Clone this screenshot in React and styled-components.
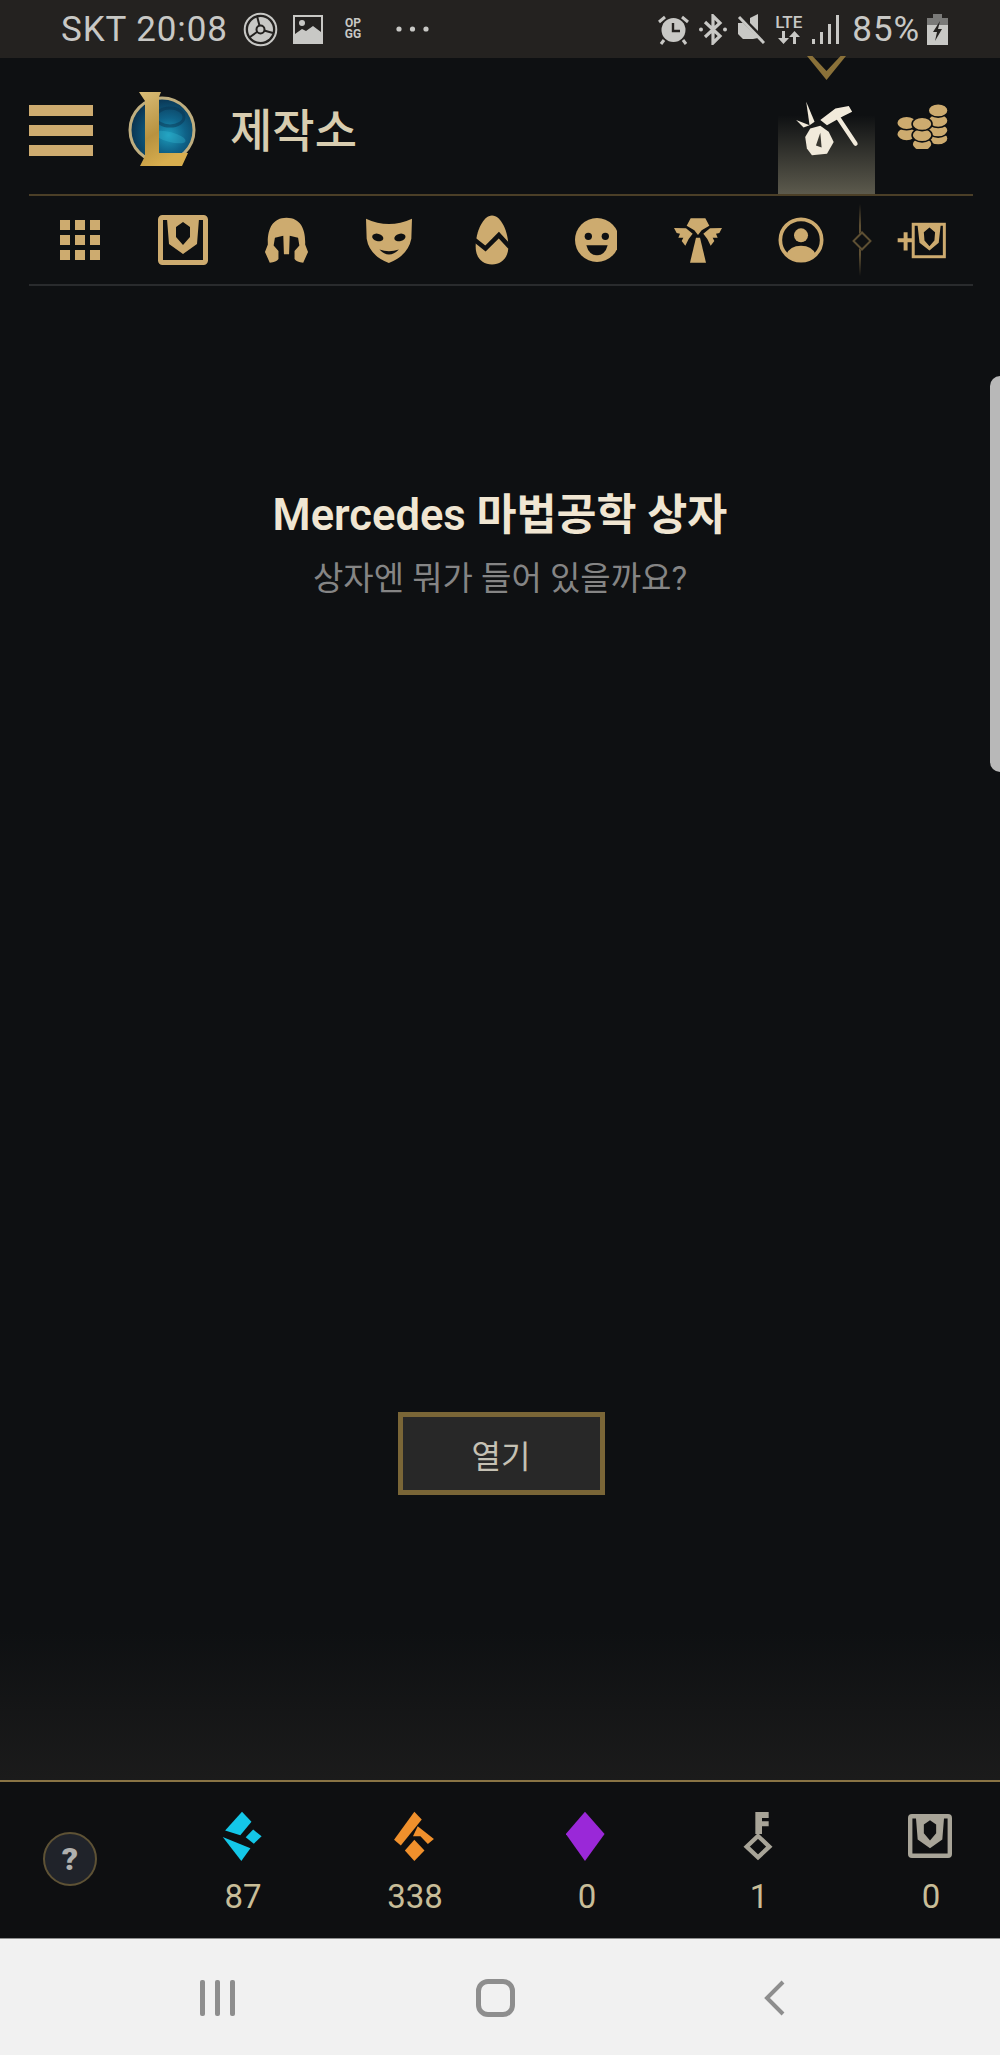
import styled, { createGlobalStyle } from 'styled-components';

const GOLD = '#cdab6f';
const BG = '#0e1012';
const STATUS = '#c8c8c5';

const GlobalStyle = createGlobalStyle`
  html, body {
    margin: 0;
    padding: 0;
    background: ${BG};
  }
  * {
    box-sizing: border-box;
  }
`;

const ChestIcon = ({ color, size }) => (
  <svg width={size} height={size} viewBox='0 0 50 50'>
    <rect x='2.5' y='2.5' width='45' height='45' rx='2' fill='none' stroke={color} strokeWidth='5' />
    <path
      fillRule='evenodd'
      fill={color}
      d='M9 4H41L39 29L25 39L11 29ZM25 7L32 12V22L25 30L18 22V12Z'
    />
  </svg>
);

const GridIcon = () => (
  <svg width='40' height='40' viewBox='0 0 40 40' fill={GOLD}>
    {[0, 15, 30].map((y) =>
      [0, 15, 30].map((x) => <rect key={`${x}-${y}`} x={x} y={y} width='10' height='10' />)
    )}
  </svg>
);

const HelmetIcon = () => (
  <svg width='45' height='47' viewBox='790 640 140 145'>
    <path
      fill={GOLD}
      d='M860 642C905 642 920 680 918 725L927 748L912 782Q892 780 885 770L885 745L900 728L896 704L870 698L868 755H852L850 698L824 704L820 728L835 745L835 770Q828 780 808 782L793 748L802 725C800 680 815 642 860 642Z'
    />
  </svg>
);

const MaskIcon = () => (
  <svg width='46' height='45' viewBox='1100 648 137 134'>
    <path fill={GOLD} d='M1100 650Q1168 682 1237 650L1235 710Q1225 760 1168 782Q1110 760 1102 710Z' />
    <ellipse cx='1135' cy='706' rx='17' ry='11' fill={BG} transform='rotate(15 1135 706)' />
    <ellipse cx='1201' cy='706' rx='17' ry='11' fill={BG} transform='rotate(-15 1201 706)' />
    <path fill={BG} d='M1140 742Q1168 772 1198 742Q1168 752 1140 742Z' />
  </svg>
);

const EggIcon = () => (
  <svg width='34' height='50' viewBox='105 40 104 150'>
    <path
      fill={GOLD}
      d='M157 40C185 40 207 90 207 135C207 170 185 190 157 190C128 190 107 170 107 135C107 90 130 40 157 40Z'
    />
    <path fill='none' stroke={BG} strokeWidth='14' d='M103 114L137 141L178 100L212 137' />
  </svg>
);

const SmileIcon = () => (
  <svg width='44' height='44' viewBox='222 653 132 132'>
    <circle cx='294' cy='719' r='66' fill={GOLD} />
    <circle cx='268' cy='708' r='11' fill={BG} />
    <circle cx='319' cy='708' r='11' fill={BG} />
    <path fill={BG} d='M262 735H326Q318 765 294 765Q270 765 262 735Z' />
  </svg>
);

const WardIcon = () => (
  <svg width='50' height='46' viewBox='520 650 148 138' fill={GOLD}>
    <path d='M572 654H616L628 676L605 690L594 704L583 690L560 676Z' />
    <path d='M588 712H600L618 787H570Z' />
    <path d='M522 683L558 684L578 700L566 716L556 736L545 722L550 712L535 712L540 700L530 698Z' />
    <path d='M666 683L630 684L610 700L622 716L632 736L643 722L638 712L653 712L648 700L658 698Z' />
  </svg>
);

const ProfileIcon = () => (
  <svg width='46' height='46' viewBox='836 647 138 138'>
    <circle cx='905' cy='716' r='62' fill='none' stroke={GOLD} strokeWidth='11' />
    <circle cx='905' cy='702' r='21' fill={GOLD} />
    <path fill={GOLD} d='M860 760Q872 733 905 733Q938 733 950 760Q930 780 905 780Q880 780 860 760Z' />
  </svg>
);

const AddChestIcon = () => (
  <svg width='49' height='37' viewBox='1190 660 148 110'>
    <path fill={GOLD} d='M1192 708H1210V690H1222V708H1240V720H1222V745H1210V720H1192Z' />
    <rect x='1239' y='666' width='94' height='98' fill={BG} stroke={GOLD} strokeWidth='9' />
    <path
      fillRule='evenodd'
      fill={GOLD}
      d='M1252 668H1322L1316 722L1288 745L1258 722ZM1288 676L1305 690L1303 715L1288 732L1273 715L1271 690Z'
    />
  </svg>
);

const CraftIcon = () => (
  <svg width='64' height='57' viewBox='75 130 190 170'>
    <path fill='#f1eadb' d='M105 240L120 215L150 207L175 225L190 255L170 290L125 295L110 275Z' />
    <path fill='#3a3830' d='M150 228L154 272L137 266Z' />
    <path fill='#f1eadb' d='M108 135L133 195L118 205Z' />
    <path fill='#f1eadb' d='M78 190L118 205L100 212Z' />
    <path fill='#f1eadb' d='M150 190L195 155L235 148L245 165L215 180L170 205Z' />
    <path stroke='#f1eadb' strokeWidth='13' strokeLinecap='round' d='M205 185L255 260' />
  </svg>
);

const CoinsIcon = () => {
  const coins = [
    [409, 237],
    [409, 202],
    [507, 250],
    [507, 225],
    [507, 195],
    [507, 163],
    [457, 268],
    [457, 240],
    [457, 205],
  ];
  return (
    <svg width='54' height='46' viewBox='385 140 156 143'>
      {coins.map(([cx, cy]) => (
        <ellipse key={`${cx}-${cy}`} cx={cx} cy={cy} rx='31' ry='21' fill={GOLD} stroke={BG} strokeWidth='5' />
      ))}
    </svg>
  );
};

const LogoIcon = () => (
  <svg width='70' height='78' viewBox='0 0 70 78'>
    <defs>
      <radialGradient id='orb' cx='60%' cy='58%' r='60%'>
        <stop offset='0%' stopColor='#1d9cbc' />
        <stop offset='45%' stopColor='#0f6288' />
        <stop offset='100%' stopColor='#0a3350' />
      </radialGradient>
      <linearGradient id='gilt' x1='0' y1='0' x2='0.4' y2='1'>
        <stop offset='0%' stopColor='#d9bd78' />
        <stop offset='60%' stopColor='#b8923f' />
        <stop offset='100%' stopColor='#d8ae4e' />
      </linearGradient>
    </defs>
    <circle cx='34' cy='39' r='32' fill='url(#orb)' stroke='#bfae7f' strokeWidth='3' />
    <ellipse cx='42' cy='46' rx='16' ry='5' fill='#35b6d2' opacity='0.35' transform='rotate(15 42 46)' />
    <ellipse cx='42' cy='26' rx='14' ry='9' fill='none' stroke='#0a3350' strokeWidth='3' opacity='0.5' />
    <path fill='url(#gilt)' d='M11 1H33L31 6V62H60L54 75H12L17 65V10Z' />
  </svg>
);

const GameIcon = () => (
  <svg width='35' height='35' viewBox='0 0 35 35'>
    <circle cx='17.5' cy='17.5' r='15.8' fill='none' stroke={STATUS} strokeWidth='2' />
    <circle cx='17.5' cy='17.5' r='12.5' fill={STATUS} />
    <path stroke='#242220' strokeWidth='2' d='M17.5 17.5L14 4M17.5 17.5L30 21M17.5 17.5L7 25' />
    <circle cx='17.5' cy='17.5' r='4' fill={STATUS} stroke='#242220' strokeWidth='2' />
  </svg>
);

const PictureIcon = () => (
  <svg width='30' height='29' viewBox='0 0 30 29'>
    <rect width='30' height='29' fill={STATUS} />
    <rect x='2' y='2' width='26' height='19' fill='#242220' />
    <circle cx='9' cy='8' r='3' fill={STATUS} />
    <path fill={STATUS} d='M2 19L9 14L13 16L20 11L28 17V24H2Z' />
  </svg>
);

const DotsIcon = () => (
  <svg width='33' height='6' viewBox='0 0 33 6' fill={STATUS}>
    <circle cx='3' cy='3' r='2.6' />
    <circle cx='16.5' cy='3' r='2.6' />
    <circle cx='30' cy='3' r='2.6' />
  </svg>
);

const AlarmIcon = () => (
  <svg width='31' height='31' viewBox='0 0 31 31'>
    <circle cx='15.5' cy='16' r='12' fill={STATUS} />
    <path stroke='#242220' strokeWidth='2.4' fill='none' d='M15 9V17H22' />
    <path stroke={STATUS} strokeWidth='3' d='M1 8L7 3M30 8L24 3M6 26L3 30M25 26L28 30' />
  </svg>
);

const BluetoothIcon = () => (
  <svg width='28' height='31' viewBox='0 0 28 31'>
    <path stroke={STATUS} strokeWidth='3.2' fill='none' d='M6 8L21 22L14 29V2L21 9L6 23' />
    <circle cx='2' cy='15.5' r='2' fill={STATUS} />
    <circle cx='26' cy='15.5' r='2' fill={STATUS} />
  </svg>
);

const MuteIcon = () => (
  <svg width='28' height='30' viewBox='0 0 28 30'>
    <path fill={STATUS} d='M1 9H6L21 24L16 25H6L1 20ZM13 4L21 0V17L13 9Z' />
    <path stroke={STATUS} strokeWidth='3' d='M2 3L27 29' />
  </svg>
);

const TransferIcon = () => (
  <svg width='24' height='13' viewBox='0 0 24 13' fill={STATUS}>
    <path d='M5 0H8V7H12L6.5 13L1 7H5Z' />
    <path d='M16 13H19V6H23L17.5 0L12 6H16Z' />
  </svg>
);

const SignalIcon = () => (
  <svg width='27' height='29' viewBox='0 0 27 29' fill={STATUS}>
    <rect x='0' y='24' width='3' height='5' />
    <rect x='8' y='17' width='3' height='12' />
    <rect x='16' y='9' width='3' height='20' />
    <rect x='24' y='0' width='3' height='29' />
  </svg>
);

const BatteryIcon = () => (
  <svg width='21' height='31' viewBox='0 0 21 31'>
    <rect x='6' y='0' width='9' height='4' fill='#7a7a78' />
    <rect x='0' y='4' width='21' height='7' fill='#7a7a78' />
    <rect x='0' y='11' width='21' height='20' fill={STATUS} />
    <path fill='#242220' d='M13 7L6 18H10L8 27L15 15H11Z' />
  </svg>
);

const BlueEssenceIcon = () => (
  <svg width='40' height='50' viewBox='668 120 118 148' fill='#14c7e8'>
    <path d='M727 122L755 152L722 192L677 178Z' />
    <path d='M760 175L785 195L762 217L738 198Z' />
    <path d='M670 197L752 230L725 268Z' />
  </svg>
);

const OrangeEssenceIcon = () => (
  <svg width='40' height='50' viewBox='1180 120 118 148' fill='#f0902c'>
    <path d='M1240 122L1262 145L1200 222L1180 205Z' />
    <path d='M1250 165L1298 203L1280 218L1258 195L1236 195Z' />
    <path d='M1240 205L1270 237L1240 268L1212 237Z' />
  </svg>
);

const GemIcon = () => (
  <svg width='40' height='50' viewBox='198 120 118 148'>
    <path fill='#9a28d8' d='M254 122L312 188L254 268L197 188Z' />
  </svg>
);

const KeyIcon = () => (
  <svg width='30' height='50' viewBox='725 120 90 148'>
    <path fill='#a8a498' d='M762 122H802V140H782V150H802V165H782V188H762Z' />
    <path fill='none' stroke='#a8a498' strokeWidth='13' d='M770 194L804 226L770 258L736 226Z' />
  </svg>
);

const tabs = [GridIcon, () => <ChestIcon color={GOLD} size={50} />, HelmetIcon, MaskIcon, EggIcon, SmileIcon, WardIcon, ProfileIcon];

const wallet = [
  { Icon: BlueEssenceIcon, value: 87 },
  { Icon: OrangeEssenceIcon, value: 338 },
  { Icon: GemIcon, value: 0 },
  { Icon: KeyIcon, value: 1 },
  { Icon: () => <ChestIcon color='#a8a498' size={44} />, value: 0 },
];

export default function App() {
  return (
    <>
      <GlobalStyle />
      <Page>
        <StatusBar>
          <StatusLeft>
            <StatusText>SKT 20:08</StatusText>
            <GameIcon />
            <PictureIcon />
            <OpGg>
              OP
              <br />
              GG
            </OpGg>
            <DotsIcon />
          </StatusLeft>
          <StatusRight>
            <AlarmIcon />
            <BluetoothIcon />
            <MuteIcon />
            <LteBlock>
              <LteText>LTE</LteText>
              <TransferIcon />
            </LteBlock>
            <SignalIcon />
            <Percent>85%</Percent>
            <BatteryIcon />
          </StatusRight>
        </StatusBar>

        <Header>
          <HeaderLeft>
            <Burger>
              <BurgerBar />
              <BurgerBar />
              <BurgerBar />
            </Burger>
            <LogoIcon />
            <Title>제작소</Title>
          </HeaderLeft>
          <HeaderTabs>
            <ActiveTab>
              <Chevron />
              <CraftIcon />
            </ActiveTab>
            <CoinTab>
              <CoinsIcon />
            </CoinTab>
          </HeaderTabs>
        </Header>

        <TabRow>
          {tabs.map((TabIcon, index) => (
            <TabCell key={index}>
              <TabIcon />
            </TabCell>
          ))}
          <Divider />
          <AddCell>
            <AddChestIcon />
          </AddCell>
        </TabRow>

        <Main>
          <Heading>Mercedes 마법공학 상자</Heading>
          <SubHeading>상자엔 뭐가 들어 있을까요?</SubHeading>
          <OpenButton>열기</OpenButton>
        </Main>

        <Footer>
          <HelpButton>?</HelpButton>
          <Wallet>
            {wallet.map(({ Icon, value }, index) => (
              <WalletItem key={index}>
                <WalletIcon>
                  <Icon />
                </WalletIcon>
                <WalletValue>{value}</WalletValue>
              </WalletItem>
            ))}
          </Wallet>
        </Footer>

        <NavBar>
          <RecentsIcon>
            <RecentsBar />
            <RecentsBar />
            <RecentsBar />
          </RecentsIcon>
          <HomeIcon />
          <BackIcon viewBox='0 0 21 36'>
            <path d='M19 2L3 18L19 34' fill='none' stroke='#8e8e8e' strokeWidth='4' />
          </BackIcon>
        </NavBar>

        <ScrollHandle />
      </Page>
    </>
  );
}

const Page = styled.div`
  position: relative;
  width: 1000px;
  height: 2055px;
  overflow: hidden;
  display: flex;
  flex-direction: column;
  background: ${BG};
  font-family: Roboto, 'Noto Sans CJK KR', sans-serif;
`;

const StatusBar = styled.div`
  height: 58px;
  flex: none;
  display: flex;
  align-items: center;
  justify-content: space-between;
  padding: 0 52px 0 61px;
  background: #242220;
`;

const StatusLeft = styled.div`
  display: flex;
  align-items: center;
  gap: 15px;
`;

const StatusRight = styled.div`
  display: flex;
  align-items: center;
  gap: 10px;
`;

const StatusText = styled.span`
  font-size: 35px;
  letter-spacing: 0.9px;
  color: ${STATUS};
  white-space: nowrap;
`;

const Percent = styled(StatusText)`
  margin: 0 -3px 0 3px;
`;

const OpGg = styled.span`
  width: 20px;
  margin: 0 18px 0 5px;
  font-size: 12px;
  line-height: 11px;
  font-weight: 700;
  text-align: center;
  color: ${STATUS};
`;

const LteBlock = styled.div`
  display: flex;
  flex-direction: column;
  align-items: center;
  gap: 1px;
`;

const LteText = styled.span`
  font-size: 17px;
  line-height: 16px;
  font-weight: 500;
  color: ${STATUS};
`;

const Header = styled.div`
  height: 138px;
  flex: none;
  margin: 0 27px 0 29px;
  display: flex;
  justify-content: space-between;
  border-bottom: 2px solid #4b3f27;
`;

const HeaderLeft = styled.div`
  display: flex;
  align-items: center;
  height: 136px;
  padding-top: 8px;
`;

const Burger = styled.div`
  display: flex;
  flex-direction: column;
  gap: 9px;
  margin-right: 35px;
`;

const BurgerBar = styled.div`
  width: 64px;
  height: 11px;
  background: ${GOLD};
`;

const Title = styled.h1`
  margin: 0 0 6px 32px;
  font-size: 46px;
  font-weight: 500;
  color: #d8cdb0;
`;

const HeaderTabs = styled.div`
  display: flex;
  margin-right: 1px;
`;

const ActiveTab = styled.div`
  position: relative;
  width: 97px;
  display: flex;
  justify-content: center;
  padding-top: 42px;
  background: linear-gradient(to bottom, transparent 42%, #5c5a4d 100%);
`;

const Chevron = styled.div`
  position: absolute;
  top: -2px;
  left: 29px;
  width: 39px;
  height: 24px;
  background: #8a7139;
  clip-path: polygon(0 0, 14% 0, 50% 62%, 86% 0, 100% 0, 50% 100%);

  &::before {
    content: '';
    position: absolute;
    top: 0;
    left: 12px;
    width: 15px;
    height: 9px;
    background: #5d4f33;
    clip-path: polygon(0 0, 20% 0, 50% 55%, 80% 0, 100% 0, 50% 100%);
  }
`;

const CoinTab = styled.div`
  width: 97px;
  display: flex;
  justify-content: center;
  padding: 45px 0 0 0;
`;

const TabRow = styled.div`
  height: 90px;
  flex: none;
  margin: 0 27px 0 29px;
  display: flex;
  align-items: center;
  border-bottom: 2px solid #292b2d;
`;

const TabCell = styled.div`
  width: 102.9px;
  flex: none;
  display: flex;
  justify-content: center;
  align-items: center;
`;

const Divider = styled.div`
  position: relative;
  width: 2px;
  height: 72px;
  margin-left: 7px;
  flex: none;
  background: linear-gradient(to bottom, transparent, #5d4f33 30%, #5d4f33 70%, transparent);

  &::after {
    content: '';
    position: absolute;
    top: 30px;
    left: -4px;
    width: 10px;
    height: 10px;
    background: ${BG};
    border: 2px solid #5d4f33;
    transform: rotate(45deg);
  }
`;

const AddCell = styled.div`
  flex: 1;
  display: flex;
  justify-content: flex-end;
  padding-right: 27px;
`;

const Main = styled.div`
  flex: 1;
  display: flex;
  flex-direction: column;
  align-items: center;
  padding: 205px 0 285px;
  background: linear-gradient(to bottom, ${BG} 90%, #1b1b1b 100%);
`;

const Heading = styled.h2`
  margin: 0;
  font-size: 43.5px;
  line-height: 50px;
  font-weight: 600;
  color: #f0e6d2;
`;

const SubHeading = styled.p`
  margin: 16px 0 0;
  font-size: 33px;
  line-height: 44px;
  color: #858585;
`;

const OpenButton = styled.button`
  width: 207px;
  height: 83px;
  margin: auto 0 0 2px;
  border: 5px solid #7a6637;
  background: #282828;
  color: #c5c1b4;
  font-family: inherit;
  font-size: 32px;
`;

const Footer = styled.div`
  height: 158px;
  flex: none;
  display: flex;
  align-items: flex-start;
  padding: 29px 0 0 43px;
  background: #0e0f11;
  border-top: 2px solid #8a7445;
`;

const HelpButton = styled.div`
  width: 54px;
  height: 54px;
  margin: 21px 96px 0 0;
  flex: none;
  display: flex;
  align-items: center;
  justify-content: center;
  border-radius: 50%;
  border: 2px solid #5e5235;
  background: #20232a;
  color: #b0b0ae;
  font-size: 32px;
  font-weight: 900;
`;

const Wallet = styled.div`
  display: flex;
  gap: 72px;
`;

const WalletItem = styled.div`
  width: 100px;
  display: flex;
  flex-direction: column;
  align-items: center;
`;

const WalletIcon = styled.div`
  height: 50px;
  margin-right: 3px;
  display: flex;
  align-items: center;
  justify-content: center;
`;

const WalletValue = styled.span`
  margin-top: 18px;
  font-size: 33px;
  line-height: 36px;
  color: #c8bd98;
`;

const NavBar = styled.div`
  height: 117px;
  flex: none;
  display: flex;
  align-items: center;
  gap: 241px;
  padding: 2px 0 0 200px;
  background: #f1f1f1;
  border-top: 1px solid #8f8f8f;
`;

const RecentsIcon = styled.div`
  width: 35px;
  display: flex;
  justify-content: space-between;
`;

const RecentsBar = styled.div`
  width: 5px;
  height: 36px;
  border-radius: 2px;
  background: #8e8e8e;
`;

const HomeIcon = styled.div`
  width: 39px;
  height: 38px;
  border: 5px solid #8e8e8e;
  border-radius: 12px;
`;

const BackIcon = styled.svg`
  width: 21px;
  height: 36px;
  margin-left: 8px;
`;

const ScrollHandle = styled.div`
  position: absolute;
  top: 376px;
  right: 0;
  width: 10px;
  height: 396px;
  background: #b8b8b8;
  border-radius: 10px 0 0 10px;
`;
